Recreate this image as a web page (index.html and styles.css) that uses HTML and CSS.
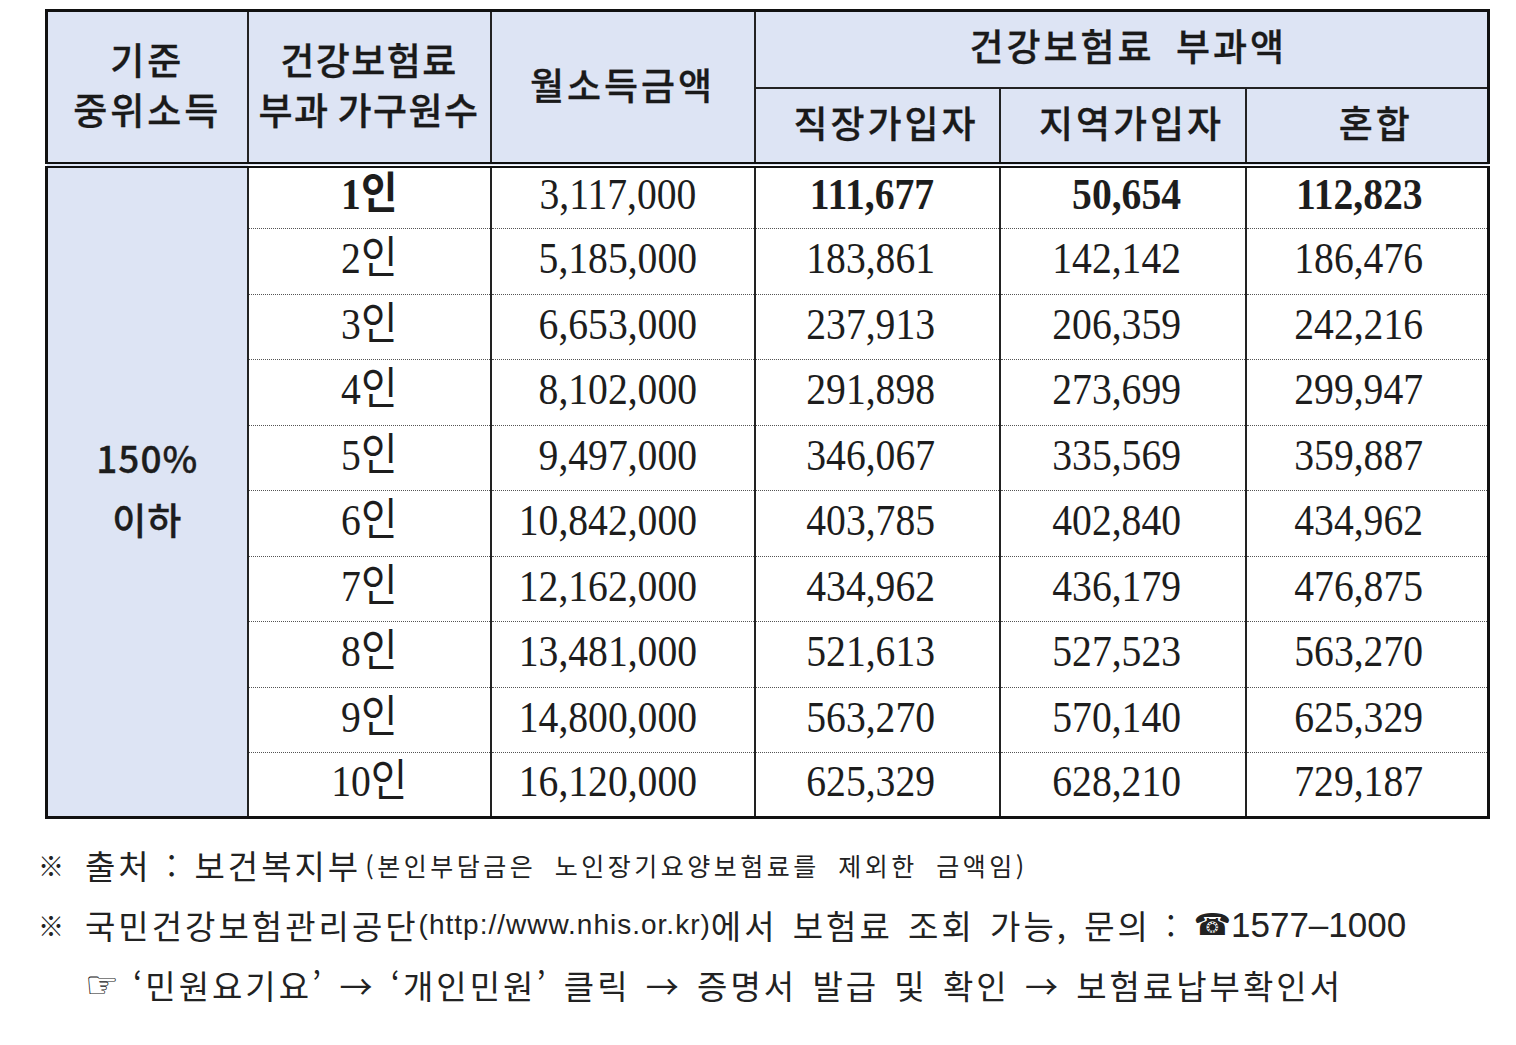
FILE: index.html
```html
<!DOCTYPE html>
<html lang="ko">
<head>
<meta charset="utf-8">
<title>건강보험료 부과액</title>
<link rel="stylesheet" href="styles.css">
</head>
<body>
<div class="page">
  <table class="fee">
    <colgroup>
      <col class="c1"><col class="c2"><col class="c3"><col class="c4"><col class="c5"><col class="c6">
    </colgroup>
    <thead>
      <tr class="h1">
        <th rowspan="2" class="rs">기준<br>중위소득</th>
        <th rowspan="2" class="rs tight">건강보험료<br>부과 가구원수</th>
        <th rowspan="2" class="rs">월소득금액</th>
        <th colspan="3" class="grp-h">건강보험료 부과액</th>
      </tr>
      <tr class="h2">
        <th>직장가입자</th>
        <th>지역가입자</th>
        <th>혼합</th>
      </tr>
    </thead>
    <tbody>
      <tr class="bold">
        <td rowspan="10" class="grp"><div>150%</div><div>이하</div></td>
        <td class="n"><span>1인</span></td>
        <td class="v v3"><span>3,117,000</span></td>
        <td class="v"><span>111,677</span></td>
        <td class="v"><span>50,654</span></td>
        <td class="v"><span>112,823</span></td>
      </tr>
      <tr><td class="n"><span>2인</span></td><td class="v v3"><span>5,185,000</span></td><td class="v"><span>183,861</span></td><td class="v"><span>142,142</span></td><td class="v"><span>186,476</span></td></tr>
      <tr><td class="n"><span>3인</span></td><td class="v v3"><span>6,653,000</span></td><td class="v"><span>237,913</span></td><td class="v"><span>206,359</span></td><td class="v"><span>242,216</span></td></tr>
      <tr><td class="n"><span>4인</span></td><td class="v v3"><span>8,102,000</span></td><td class="v"><span>291,898</span></td><td class="v"><span>273,699</span></td><td class="v"><span>299,947</span></td></tr>
      <tr><td class="n"><span>5인</span></td><td class="v v3"><span>9,497,000</span></td><td class="v"><span>346,067</span></td><td class="v"><span>335,569</span></td><td class="v"><span>359,887</span></td></tr>
      <tr><td class="n"><span>6인</span></td><td class="v v3"><span>10,842,000</span></td><td class="v"><span>403,785</span></td><td class="v"><span>402,840</span></td><td class="v"><span>434,962</span></td></tr>
      <tr><td class="n"><span>7인</span></td><td class="v v3"><span>12,162,000</span></td><td class="v"><span>434,962</span></td><td class="v"><span>436,179</span></td><td class="v"><span>476,875</span></td></tr>
      <tr><td class="n"><span>8인</span></td><td class="v v3"><span>13,481,000</span></td><td class="v"><span>521,613</span></td><td class="v"><span>527,523</span></td><td class="v"><span>563,270</span></td></tr>
      <tr><td class="n"><span>9인</span></td><td class="v v3"><span>14,800,000</span></td><td class="v"><span>563,270</span></td><td class="v"><span>570,140</span></td><td class="v"><span>625,329</span></td></tr>
      <tr><td class="n"><span>10인</span></td><td class="v v3"><span>16,120,000</span></td><td class="v"><span>625,329</span></td><td class="v"><span>628,210</span></td><td class="v"><span>729,187</span></td></tr>
    </tbody>
  </table>

  <div class="notes">
    <p class="note"><span class="mark">※</span>출처 : 보건복지부<span class="small">(본인부담금은 노인장기요양보험료를 제외한 금액임)</span></p>
    <p class="note"><span class="mark">※</span>국민건강보험관리공단<span class="url">(http://www.nhis.or.kr)</span>에서 보험료 조회 가능, 문의 : <span class="tel"><span class="phone">☎</span>1577–1000</span></p>
    <p class="note sub"><span class="hand">☞</span>‘민원요기요’ → ‘개인민원’ 클릭 → 증명서 발급 및 확인 → 보험료납부확인서</p>
  </div>
</div>
</body>
</html>
```

FILE: styles.css
```css
* { box-sizing: border-box; }

body {
  margin: 0;
  background: #ffffff;
  color: #1d1d1d;
  font-family: "Noto Sans CJK KR", "Noto Sans", sans-serif;
}

.page {
  padding: 9px 0 0 45px;
}

.fee {
  border-collapse: collapse;
  table-layout: fixed;
  width: 1442px;
  border: 3px solid #111;
}

.c1 { width: 201px; }
.c2 { width: 243px; }
.c3 { width: 264px; }
.c4 { width: 245px; }
.c5 { width: 246px; }
.c6 { width: 243px; }

.fee th {
  background: #dde4f4;
  font-weight: 500;
  font-size: 37px;
  line-height: 50px;
  letter-spacing: 3px;
  color: #1a1a1a;
  -webkit-text-stroke: 0.3px #1a1a1a;
  text-align: center;
  padding: 0 0 6px;
  border: 2px solid #222;
}

.fee th.tight {
  letter-spacing: 1.5px;
  word-spacing: -4px;
}

.fee .h1 { height: 77px; }
.fee .h2 { height: 77px; }

.fee th.rs,
.fee .h2 th {
  border-bottom: 6px double #111;
}

.fee .h2 th {
  padding-left: 18px;
}

.fee .grp-h {
  padding: 0 0 8px 14px;
  word-spacing: 8px;
}

.fee tbody tr { height: 65px; }
.fee tbody tr:nth-child(even) { height: 66px; }
.fee tbody tr:first-child { height: 64px; }
.fee tbody tr:last-child { height: 65px; }

.fee td {
  padding: 0 0 5px;
  border-left: 2px solid #222;
  border-right: 2px solid #222;
  border-top: 1px dotted #555;
  border-bottom: 1px dotted #555;
  font-family: "Liberation Serif", "Noto Sans CJK KR", serif;
  font-size: 44px;
  line-height: 52px;
  color: #1d1d1d;
  white-space: nowrap;
}

.fee td.grp {
  background: #dde4f4;
  text-align: center;
  font-family: "Noto Sans CJK KR", "Noto Sans", sans-serif;
  font-size: 37px;
  line-height: 62px;
  font-weight: 500;
  letter-spacing: 1px;
  -webkit-text-stroke: 0.3px #1a1a1a;
  padding: 0;
  border-bottom: 3px solid #111;
}

.fee td.grp div:last-child {
  margin-bottom: 8px;
}

.fee td.n {
  text-align: center;
}

.fee td.n span {
  display: inline-block;
  transform: scaleX(0.9);
}

.fee td.v {
  text-align: right;
  padding-right: 64px;
}

.fee td.v3 {
  padding-right: 57px;
}

.fee td.v span {
  display: inline-block;
  transform: scaleX(0.9);
  transform-origin: right center;
}

.fee tr.bold td.n,
.fee tr.bold td.v {
  font-weight: 700;
}

.fee tr.bold td.v3 {
  font-weight: 400;
}

.notes {
  margin-top: 16px;
  margin-left: -7px;
}

.note {
  margin: 0;
  height: 60px;
  font-size: 33px;
  line-height: 60px;
  letter-spacing: 3px;
  word-spacing: 3px;
  color: #222;
  white-space: nowrap;
}

.note span {
  line-height: 60px;
  vertical-align: top;
}

.mark {
  display: inline-block;
  width: 47px;
  font-size: 26px;
  letter-spacing: 0;
}

.small {
  margin-left: 4px;
  font-size: 25px;
  letter-spacing: 3.5px;
  word-spacing: 8px;
}

.url {
  font-family: "Liberation Sans", Arial, sans-serif;
  font-size: 28px;
  letter-spacing: 1px;
  word-spacing: 0;
}

.tel {
  font-family: "Liberation Sans", Arial, sans-serif;
  font-size: 35px;
  letter-spacing: 0;
}

.phone {
  font-family: "DejaVu Sans", sans-serif;
  font-size: 30px;
}

.note.sub {
  padding-left: 47px;
}

.hand {
  font-family: "DejaVu Sans", sans-serif;
  font-size: 38px;
  letter-spacing: 0;
  margin-right: 14px;
}
```
